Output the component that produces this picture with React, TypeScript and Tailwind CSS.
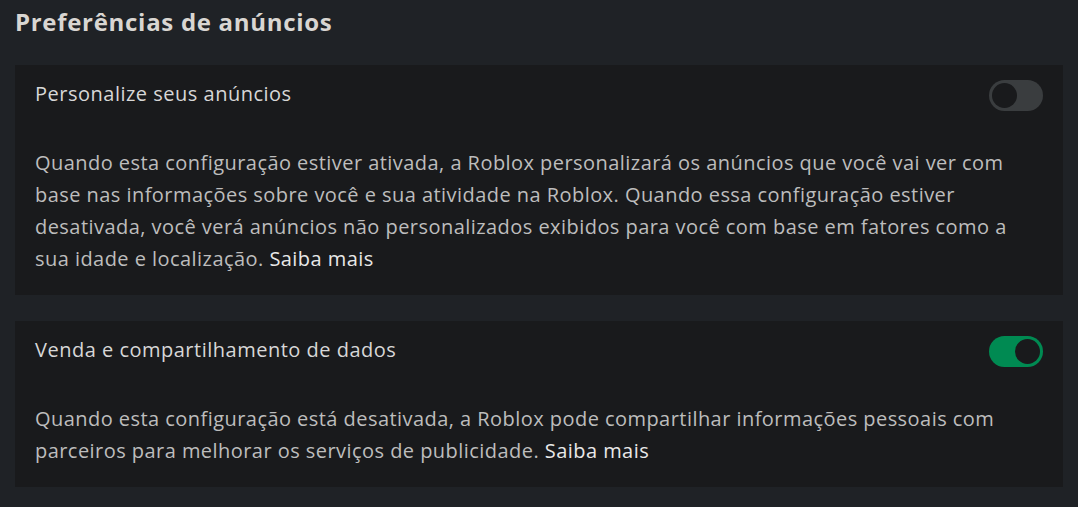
import { useState } from 'react';

interface PrefRowProps {
  title: string;
  text: string;
  on: boolean;
  onToggle: () => void;
}

function Toggle({ on, onToggle }: { on: boolean; onToggle: () => void }) {
  return (
    <button
      type="button"
      onClick={onToggle}
      aria-pressed={on}
      className={`relative h-[31px] w-[54px] shrink-0 rounded-full ${on ? 'bg-[#008a52]' : 'bg-[#3a3d3f]'}`}
    >
      <span
        className={`absolute top-[3px] h-[25px] w-[25px] rounded-full bg-[#191a1c] ${on ? 'left-[26px]' : 'left-[3px]'}`}
      />
    </button>
  );
}

function PrefRow({ title, text, on, onToggle }: PrefRowProps) {
  return (
    <div className="bg-[#191a1c] px-5 pb-[20px] pt-[15px]">
      <div className="flex items-center justify-between">
        <span className="-mt-[4px] text-[20px] leading-[28px] tracking-[0.5px] text-[#d7d7d7]">{title}</span>
        <Toggle on={on} onToggle={onToggle} />
      </div>
      <p className="mt-[36px] text-[20px] leading-[32px] tracking-[0.45px] text-[#bdbdbd]">
        {text} <a className="text-[#e8e8e8]">Saiba mais</a>
      </p>
    </div>
  );
}

export default function App() {
  const [personalize, setPersonalize] = useState(false);
  const [sale, setSale] = useState(true);

  return (
    <div className="min-h-[507px] bg-[#1f2226] px-[15px] pt-[6px]" style={{ fontFamily: '"Open Sans", "Noto Sans", sans-serif' }}>
      <h1 className="text-[24px] font-bold leading-[32px] tracking-[0.7px] text-[#d9d6d2]">Preferências de anúncios</h1>
      <div className="mt-[27px] flex flex-col gap-[26px]">
        <PrefRow
          title="Personalize seus anúncios"
          text="Quando esta configuração estiver ativada, a Roblox personalizará os anúncios que você vai ver com base nas informações sobre você e sua atividade na Roblox. Quando essa configuração estiver desativada, você verá anúncios não personalizados exibidos para você com base em fatores como a sua idade e localização."
          on={personalize}
          onToggle={() => setPersonalize((v) => !v)}
        />
        <PrefRow
          title="Venda e compartilhamento de dados"
          text="Quando esta configuração está desativada, a Roblox pode compartilhar informações pessoais com parceiros para melhorar os serviços de publicidade."
          on={sale}
          onToggle={() => setSale((v) => !v)}
        />
      </div>
    </div>
  );
}
